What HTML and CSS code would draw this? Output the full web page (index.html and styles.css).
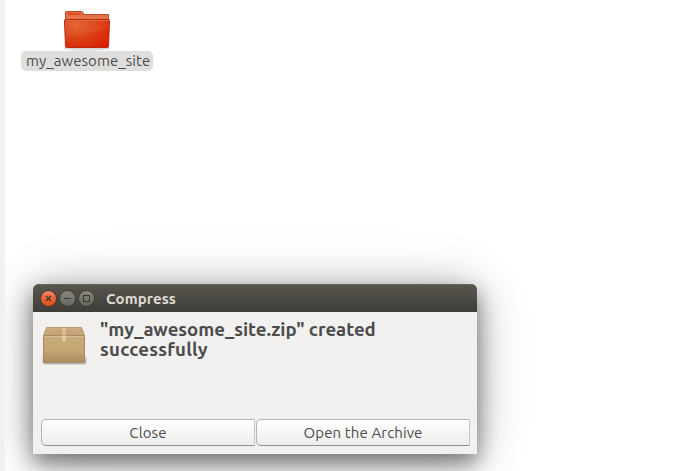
FILE: index.html
```html
<!DOCTYPE html>
<html lang="en">
<head>
<meta charset="utf-8">
<title>Compress</title>
<link rel="stylesheet" href="styles.css">
</head>
<body>
<main class="desktop">
  <div class="file">
    <svg class="folder" width="50" height="42" viewBox="0 0 50 42">
      <defs>
        <linearGradient id="tab" x1="0" y1="0" x2="0" y2="1"><stop offset="0" stop-color="#e06a3e"/><stop offset="1" stop-color="#e67d50"/></linearGradient>
        <radialGradient id="front" cx=".25" cy=".2" r="1"><stop offset="0" stop-color="#e35e2b"/><stop offset=".5" stop-color="#dc4014"/><stop offset="1" stop-color="#d91c03"/></radialGradient>
      </defs>
      <ellipse cx="25" cy="38.5" rx="23" ry="2" fill="#000" opacity=".15"/>
      <path d="M3.500 12V2.500Q3.500 1.500 4.500 1.500H19.500Q21 1.500 22 4.500H46.500V12Z" fill="url(#tab)" stroke="#b94c22"/>
      <path d="M6 4H18.500" stroke="#e04b1f" stroke-width="2"/>
      <path d="M2.500 10.500Q2.500 9.500 3.500 9.500H46.500Q47.500 9.500 47.500 10.500L46.500 36.500Q46.500 37.500 45.500 37.500H4.500Q3.500 37.500 3.500 36.500Z" fill="url(#front)" stroke="#b92a0a"/>
      <path d="M3.500 10.500H46.500" stroke="#e56a3a"/>
      <path d="M3 11H47L46.500 18Q25 25 3.500 27Z" fill="#fff" opacity=".04"/>
    </svg>
    <div class="file-name"><span class="t t-file">my_awesome_site</span></div>
  </div>
  <section class="window">
    <header class="titlebar">
      <svg class="controls" width="58" height="20" viewBox="0 0 58 20">
        <defs>
          <linearGradient id="red" x1="0" y1="0" x2="0" y2="1"><stop offset="0" stop-color="#f58a64"/><stop offset=".5" stop-color="#ee6335"/><stop offset="1" stop-color="#e64d1b"/></linearGradient>
          <linearGradient id="grey" x1="0" y1="0" x2="0" y2="1"><stop offset="0" stop-color="#8b8981"/><stop offset="1" stop-color="#63625b"/></linearGradient>
        </defs>
        <g stroke="#393832">
          <circle cx="10.500" cy="9.500" r="8" fill="url(#red)"/>
          <circle cx="29.500" cy="9.500" r="8" fill="url(#grey)"/>
          <circle cx="48.500" cy="9.500" r="8" fill="url(#grey)"/>
        </g>
        <g fill="none" stroke="#3a3934">
          <path d="M8 7L13 12M13 7L8 12" stroke-width="1.300"/>
          <path d="M26 9.500H33"/>
          <rect x="45.500" y="6.500" width="6" height="6"/>
        </g>
      </svg>
      <h1 class="title"><span class="t t-title">Compress</span></h1>
    </header>
    <div class="message">
      <svg class="package" width="48" height="46" viewBox="0 0 48 46">
        <defs>
          <linearGradient id="lid" x1="0" y1="0" x2="0" y2="1"><stop offset="0" stop-color="#d0ad7d"/><stop offset="1" stop-color="#c09d73"/></linearGradient>
          <linearGradient id="box" x1="0" y1="0" x2="0" y2="1"><stop offset="0" stop-color="#c9ac7e"/><stop offset=".5" stop-color="#c6a774"/><stop offset="1" stop-color="#ac8b5d"/></linearGradient>
        </defs>
        <rect x="2" y="33" width="45" height="8" rx="3" fill="#000" opacity=".13"/>
        <rect x="3" y="36" width="43" height="6" rx="2" fill="#000" opacity=".12"/>
        <path d="M6.500 4.500H41.500L44.500 13H3.500Z" fill="url(#lid)" stroke="#b9986c"/>
        <rect x="3.500" y="12.500" width="41" height="27" rx=".5" fill="url(#box)" stroke="#a98b5f"/>
        <path d="M4 13.500H44" stroke="#d9bf99"/>
        <path d="M22 5H26V18H22Z" fill="#eee2cf" opacity=".4"/>
        <path d="M22 13H26V18H22Z" fill="#eee2cf" opacity=".35"/>
      </svg>
      <p class="heading"><span class="t t-line1">"my_awesome_site.zip" created</span><span class="t t-line2">successfully</span></p>
    </div>
    <footer class="actions">
      <button class="button"><span class="t t-close">Close</span></button>
      <button class="button"><span class="t t-open">Open the Archive</span></button>
    </footer>
  </section>
</main>
</body>
</html>
```
FILE: styles.css
```css
* { box-sizing: border-box; }
body { margin: 0; font-family: Ubuntu, "Noto Sans", sans-serif; font-size: 15px; color: #4c4c4c; background: #fff; }
.desktop { position: relative; width: 698px; height: 471px; overflow: hidden; border-left: 5px solid #f2f1f0; }
.file { width: 132px; margin: 10px 0 0 16px; display: flex; flex-direction: column; align-items: center; }
.folder { display: block; height: 42px; margin-bottom: -1px; }
.file-name { width: 132px; height: 20px; line-height: 19px; border-radius: 5px; background: #dfdedd; padding-left: 5px; letter-spacing: .06px; }
.t { display: block; white-space: nowrap; width: max-content; }
.window { position: absolute; left: 28px; top: 284px; width: 444px; height: 170px; display: flex; flex-direction: column; border-radius: 6px 6px 0 0; background: #f2f1f0; box-shadow: 0 9px 20px rgba(0,0,0,.4), 0 5px 42px rgba(0,0,0,.3), 0 2px 70px rgba(0,0,0,.08); }
.titlebar { height: 28px; display: flex; align-items: center; padding-left: 5px; border-radius: 6px 6px 0 0; background: linear-gradient(#59564e, #3e3d39); box-shadow: inset 0 1px #66645a; }
.controls { margin-top: 1px; }
.title { margin: 2px 0 0 10px; font-size: 15px; line-height: 20px; font-weight: 700; color: #dfdbd2; letter-spacing: .1px; }
.message { display: flex; height: 107px; padding: 11px 0 0 7px; }
.package { flex: none; }
.heading { margin: -3px 0 0 12px; font-size: 18.600px; line-height: 20px; font-weight: 700; }
.t-line1 { letter-spacing: -.03px; }
.t-line2 { letter-spacing: .25px; }
.actions { display: grid; grid-template-columns: 214px 214px; gap: 1px; padding-left: 8px; }
.button { height: 27px; padding: 0; display: flex; align-items: center; justify-content: center; font: inherit; color: inherit; letter-spacing: .12px; border: 1px solid #b5b4b3; border-right-color: #c8c7c5; border-bottom-color: #91908f; border-radius: 5px 0 0 5px; background: linear-gradient(#fff, #ececeb); }
```
